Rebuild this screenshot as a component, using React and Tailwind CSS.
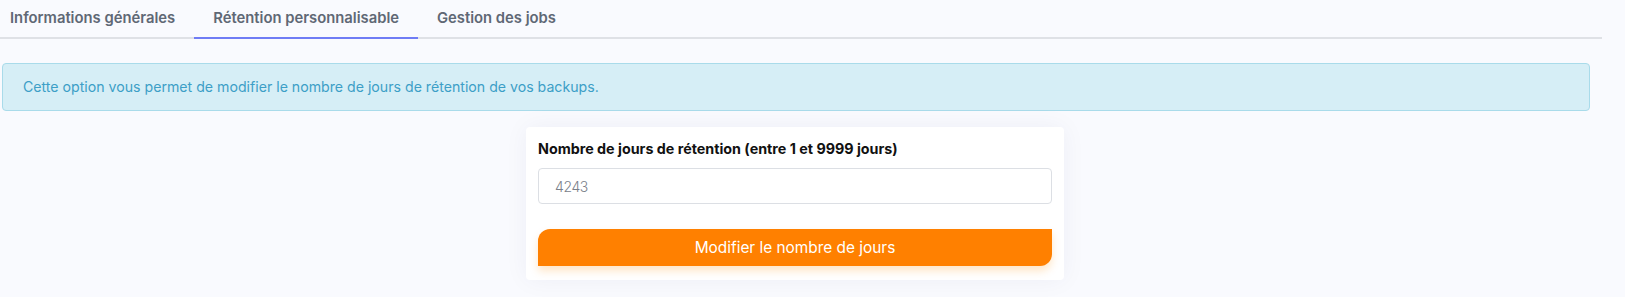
import React, { useState } from 'react';

const tabs = ['Informations générales', 'Rétention personnalisable', 'Gestion des jobs'];

function App() {
  const [active, setActive] = useState(1);
  const [days, setDays] = useState('');

  return (
    <div className="min-h-[297px] w-full bg-[#f9fafe] font-['Inter',sans-serif]">
      <div className="w-[1602px] flex border-b-2 border-[#dfe1e6]">
        <div className="flex -ml-[9px]">
          {tabs.map((t, i) => (
            <button
              key={t}
              type="button"
              onClick={() => setActive(i)}
              className={
                'h-[39px] px-[19px] -mb-[2px] border-b-2 text-[14.8px] font-semibold text-[#5f6875] ' +
                (active === i ? 'border-[#6f7cf5]' : 'border-transparent')
              }
            >
              {t}
            </button>
          ))}
        </div>
      </div>

      <div className="w-[1590px]">
        <div className="ml-[2px] mt-[24px] h-[48px] flex items-center rounded-[4px] border border-[#a9dbea] bg-[#d6eef6] px-[20px] text-[14.15px] text-[#3d9fc7]">
          Cette option vous permet de modifier le nombre de jours de rétention de vos backups.
        </div>

        <div className="flex justify-center pt-[16px] pb-[20px]">
          <div className="w-[538px] rounded-[4px] bg-white px-[12px] pt-[12px] pb-[14px] shadow-[0_0_24px_rgba(30,40,90,0.05)]">
            <label className="block text-[14.3px] font-bold text-[#111] leading-[20px]">
              Nombre de jours de rétention (entre 1 et 9999 jours)
            </label>
            <input
              type="text"
              value={days}
              onChange={(e) => setDays(e.target.value)}
              placeholder="4243"
              className="mt-[9px] block w-full h-[36px] rounded-[4px] border border-[#dcdfe4] bg-white px-[16px] text-[14px] tracking-[-0.4px] font-light text-[#333] placeholder:text-[#7a808a] focus:outline-none"
            />
            <button
              type="button"
              className="mt-[25px] w-full h-[37px] rounded-tl-[12px] rounded-br-[12px] bg-[#ff8000] text-[15.4px] text-white shadow-[0_5px_8px_rgba(255,140,0,0.22)]"
            >
              Modifier le nombre de jours
            </button>
          </div>
        </div>
      </div>
    </div>
  );
}

export default App;
